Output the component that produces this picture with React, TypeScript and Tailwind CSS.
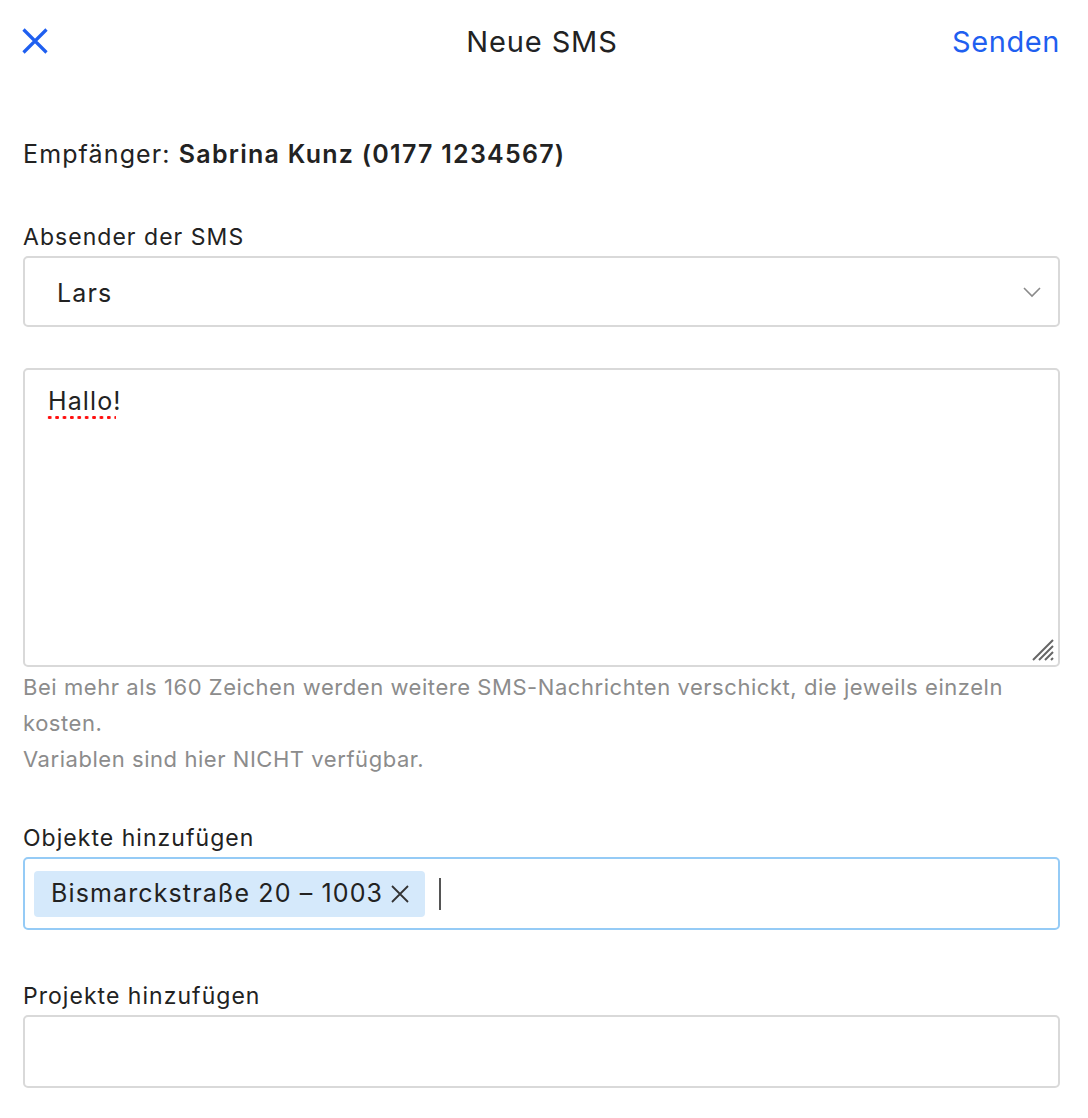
import React from "react";

export default function App() {
  return (
    <div
      className="w-[1088px] h-[1118px] bg-white text-[#222222] overflow-hidden"
      style={{ fontFamily: "Inter, 'Noto Sans', sans-serif" }}
    >
      {/* Header */}
      <div className="h-[84px] pl-[22px] pr-[28px] flex items-center justify-between relative">
        <svg width="28" height="28" viewBox="0 0 28 28" className="mt-[-2px] ml-[-1px]">
          <path d="M2.5 2.5 L25.5 25.5 M25.5 2.5 L2.5 25.5" stroke="#1f5ff0" strokeWidth="3.2" strokeLinecap="butt" />
        </svg>
        <div className="absolute left-0 right-0 text-center text-[29px] tracking-[0.03em] leading-none pointer-events-none mt-[-2px] pr-[4px]">
          Neue SMS
        </div>
        <div className="text-[29px] tracking-[0.02em] leading-none text-[#1f5ff0] mt-[-2px]">Senden</div>
      </div>

      <div className="pl-[23px] pr-[28px]">
        <div className="mt-[55px] text-[25px] tracking-[0.045em] leading-[30px]">
          Empfänger: <span className="font-semibold tracking-[0.05em]">Sabrina Kunz (0177 1234567)</span>
        </div>

        <div className="mt-[54px] text-[23px] tracking-[0.045em] leading-[28px]">Absender der SMS</div>
        <div className="mt-[5px] h-[71px] border-2 border-[#d9d9d9] rounded-[5px] flex items-center justify-between pl-[32px] pr-[16px]">
          <span className="text-[25px] tracking-[0.045em] mt-[4px]">Lars</span>
          <svg width="20" height="12" viewBox="0 0 20 12">
            <path d="M2 2 L10 10 L18 2" stroke="#8a8a8a" strokeWidth="1.6" fill="none" />
          </svg>
        </div>

        <div className="mt-[41px] h-[299px] border-2 border-[#d9d9d9] rounded-[5px] relative">
          <div className="absolute left-[23px] top-[16px] text-[25px] tracking-[0.045em] leading-[30px]">
            <span className="relative inline-block">
              Hallo!
              <span className="absolute left-[-2px] right-[6px] bottom-[-4px] h-[5px] bg-[radial-gradient(circle,#ff1010_1.6px,transparent_2px)] bg-[length:7.4px_5px]" />
            </span>
          </div>
          <svg width="26" height="26" viewBox="0 0 26 26" className="absolute right-[3px] bottom-[3px]">
            <path d="M4 24 L24 4 M10 24 L24 10 M16 24 L24 16 M22 24 L24 22" stroke="#666" strokeWidth="2" />
          </svg>
        </div>

        <div className="mt-[2px] text-[22px] tracking-[0.025em] leading-[36px] text-[#8c8c8c]">
          <div>Bei mehr als 160 Zeichen werden weitere SMS-Nachrichten verschickt, die jeweils einzeln kosten.</div>
          <div>Variablen sind hier NICHT verfügbar.</div>
        </div>

        <div className="mt-[47px] text-[23px] tracking-[0.045em] leading-[28px]">Objekte hinzufügen</div>
        <div className="mt-[5px] h-[73px] border-2 border-[#95cbf6] rounded-[5px] flex items-center pl-[9px]">
          <div className="h-[46px] bg-[#d5e9fb] rounded-[4px] flex items-center pl-[17px] pr-[15px] text-[25px] tracking-[0.045em]">
            Bismarckstraße 20 – 1003
            <svg width="20" height="20" viewBox="0 0 20 20" className="ml-[7px]">
              <path d="M2 2 L18 18 M18 2 L2 18" stroke="#333" strokeWidth="1.8" />
            </svg>
          </div>
          <div className="ml-[14px] w-[2px] h-[32px] bg-[#555]" />
        </div>

        <div className="mt-[52px] text-[23px] tracking-[0.045em] leading-[28px]">Projekte hinzufügen</div>
        <div className="mt-[5px] h-[73px] border-2 border-[#d9d9d9] rounded-[5px]" />
      </div>
    </div>
  );
}
